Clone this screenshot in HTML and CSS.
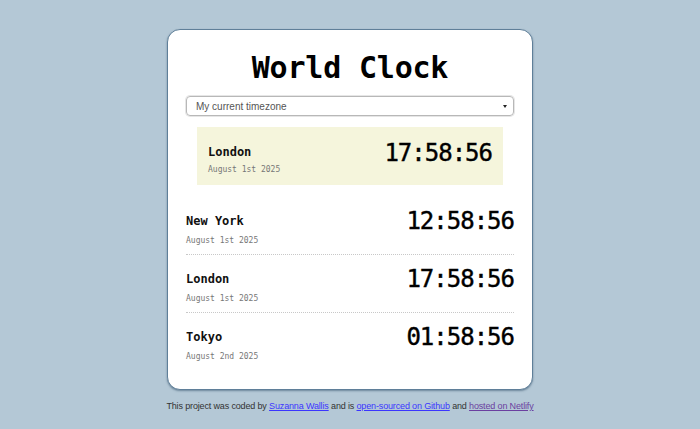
FILE: index.html
```html
<!DOCTYPE html>
<html>
<head>
<meta charset="utf-8">
<link rel="stylesheet" href="styles.css">
</head>
<body>
<div class="card">
  <h1 class="title">World Clock</h1>
  <div class="select"><span>My current timezone</span><span class="arrow"></span></div>
  <div class="row current">
    <div class="place"><div class="city">London</div><div class="date">August 1st 2025</div></div>
    <div class="time">17:58:56</div>
  </div>
  <div class="row">
    <div class="place"><div class="city">New York</div><div class="date">August 1st 2025</div></div>
    <div class="time">12:58:56</div>
  </div>
  <div class="row">
    <div class="place"><div class="city">London</div><div class="date">August 1st 2025</div></div>
    <div class="time">17:58:56</div>
  </div>
  <div class="row last">
    <div class="place"><div class="city">Tokyo</div><div class="date">August 2nd 2025</div></div>
    <div class="time">01:58:56</div>
  </div>
</div>
<p class="footer">This project was coded by <a href="#" class="link">Suzanna Wallis</a> and is <a href="#" class="link">open-sourced on Github</a> and <a href="#" class="link visited">hosted on Netlify</a></p>
</body>
</html>
```
FILE: styles.css
```css
html, body {
  margin: 0;
  padding: 0;
}
body {
  background: #b4c8d6;
  font-family: "Liberation Sans", Arial, sans-serif;
  padding-top: 29px;
}
.card {
  width: 366px;
  box-sizing: border-box;
  margin: 0 auto;
  background: #fff;
  border: 1px solid #5f7f99;
  border-radius: 13px;
  box-shadow: 0 1px 2px rgba(60, 90, 115, 0.6);
  padding: 18px 18px 19px;
  height: 361px;
}
.title {
  margin: 0;
  font-family: "DejaVu Sans Mono", monospace;
  font-weight: bold;
  font-size: 30px;
  line-height: 38px;
  padding-top: 1px;
  text-align: center;
  color: #000;
  letter-spacing: -0.2px;
}
.select {
  margin-top: 9px;
  height: 20px;
  box-sizing: border-box;
  border: 1px solid #b8b8b8;
  border-radius: 4px;
  box-shadow: 0 0 0 1px #e6e6e6;
  display: flex;
  align-items: center;
  justify-content: space-between;
  padding: 0 6px 0 9px;
  font-size: 10px;
  color: #555;
}
.arrow {
  width: 0;
  height: 0;
  border-left: 2px solid transparent;
  border-right: 2px solid transparent;
  border-top: 3px solid #222;
}
.row {
  display: flex;
  justify-content: space-between;
  align-items: flex-start;
  padding: 9px 0 8px;
  border-bottom: 1px dotted #c8c8c8;
  height: 40px;
}
.row.last {
  border-bottom: none;
}
.row.current {
  background: #f5f5dc;
  margin: 11px 11px 12px;
  padding: 12px 11px 10px;
  border-bottom: none;
  height: 36px;
}
.city {
  font-family: "DejaVu Sans Mono", monospace;
  font-weight: bold;
  font-size: 12px;
  line-height: 16px;
  margin-top: 7px;
  color: #111;
}
.date {
  font-family: "DejaVu Sans Mono", monospace;
  font-size: 8px;
  line-height: 10px;
  margin-top: 7px;
  color: #777;
}
.current .city {
  margin-top: 5px;
}
.current .date {
  margin-top: 5px;
}
.time {
  font-family: "DejaVu Sans Mono", monospace;
  font-size: 24px;
  line-height: 26px;
  letter-spacing: -1px;
  margin-top: 2px;
  color: #000;
  -webkit-text-stroke: 0.4px #000;
}
.current .time {
  margin-top: 1px;
}
.footer {
  margin: 11px 0 0;
  text-align: center;
  font-size: 9px;
  letter-spacing: -0.15px;
  color: #333;
}
.link {
  color: #3b36ff;
}
.link.visited {
  color: #6b3fa0;
}
```
